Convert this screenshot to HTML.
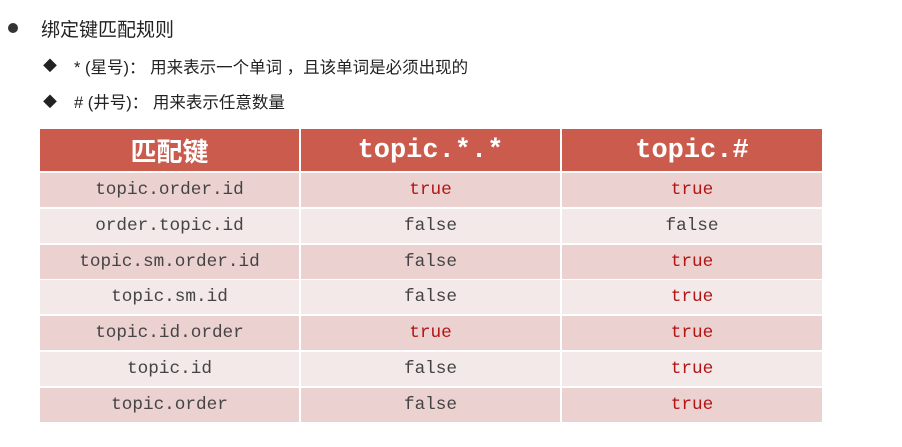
<!DOCTYPE html>
<html><head><meta charset="utf-8"><style>
body{margin:0;width:902px;height:447px;background:#fff;position:relative;overflow:hidden;font-family:"Liberation Sans","Noto Sans CJK SC",sans-serif;color:#222}
.t{position:absolute;white-space:nowrap}
.c{position:absolute;display:flex;align-items:center;justify-content:center;font-family:"Liberation Mono",monospace;font-size:17.7px;color:#444}
.h{background:#cb5b4d;color:#fff;font-weight:bold;font-size:27px;padding-top:2px;box-sizing:border-box}
.o{background:#ebd1d0}.e{background:#f4e9e9}
.r{color:#b31414}
.cj{font-family:"Noto Sans CJK SC",sans-serif;font-size:26px;padding-top:0}
</style></head><body>
<div class="t" style="left:8px;top:23px;width:10px;height:10px;border-radius:50%;background:#333"></div>
<div class="t" style="left:41px;top:15px;font-size:19px">绑定键匹配规则</div>
<div class="t" style="left:43px;top:56px;font-size:14px">◆</div>
<div class="t" style="left:74px;top:54px;font-size:16.5px">* (星号)：&nbsp;用来表示一个单词 ，且该单词是必须出现的</div>
<div class="t" style="left:43px;top:92px;font-size:14px">◆</div>
<div class="t" style="left:74px;top:89px;font-size:16.5px"># (井号)：&nbsp;用来表示任意数量</div>
<div id="tb"></div>
<script>
var rows=[["匹配键","topic.*.*","topic.#"],["topic.order.id","true","true"],["order.topic.id","false","false"],["topic.sm.order.id","false","true"],["topic.sm.id","false","true"],["topic.id.order","true","true"],["topic.id","false","true"],["topic.order","false","true"]];
var xs=[[40,259],[301,259],[562,260]];var h="";
for(var i=0;i<rows.length;i++){var y=i==0?129:173+(i-1)*35.8;var hh=i==0?42:34;
for(var j=0;j<3;j++){var cls=i==0?"h":(i%2?"o":"e");var v=rows[i][j];if(v=="true")cls+=" r";
if(i==0&&j==0)cls+=" cj";
h+='<div class="c '+cls+'" style="left:'+xs[j][0]+'px;top:'+y+'px;width:'+xs[j][1]+'px;height:'+hh+'px">'+v+'</div>';}}
document.getElementById("tb").innerHTML=h;
</script>
</body></html>
